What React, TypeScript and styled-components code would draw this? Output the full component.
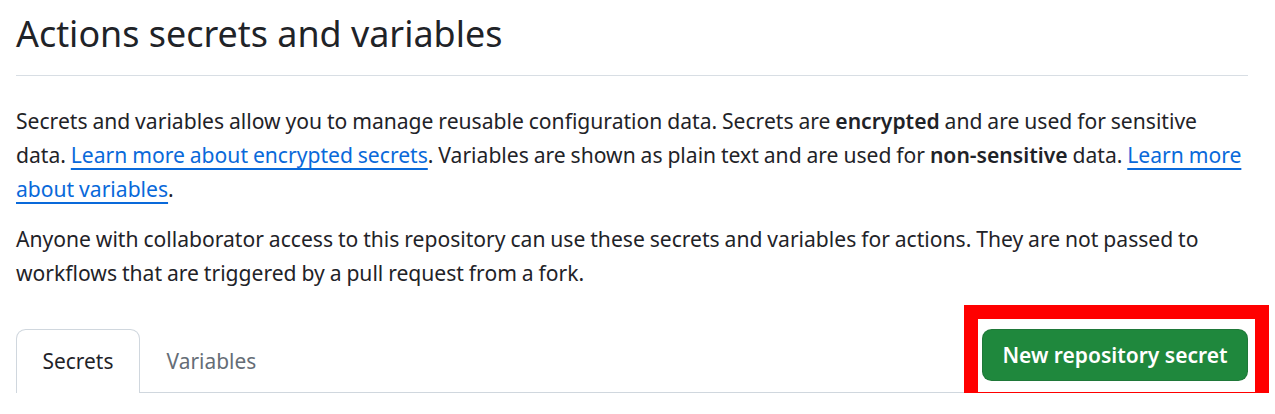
import React from 'react'
import styled, { createGlobalStyle } from 'styled-components'

const FONT = `"Segoe UI", "Noto Sans", Roboto, "Liberation Sans", sans-serif`

const GlobalStyle = createGlobalStyle`
  html, body {
    margin: 0;
    padding: 0;
    background: #ffffff;
  }
  body {
    font-family: ${FONT};
    color: #1f2328;
    -webkit-font-smoothing: antialiased;
  }
`

const Page = styled.div`
  width: 1232px;
  padding: 5px 0 0 16px;
`

const Subhead = styled.div`
  padding-bottom: 12.8px;
  margin-bottom: 28px;
  border-bottom: 1.6px solid #d8dee4;
`

const Heading = styled.h2`
  margin: 0;
  font-size: 35.9px;
  font-weight: 400;
  line-height: 57.6px;
  color: #1f2328;
`

const Paragraph = styled.p`
  margin: 0 0 17px;
  font-size: 21.1px;
  line-height: 33.6px;
  word-spacing: -0.6px;
`

const Link = styled.a`
  color: #0969da;
  text-decoration: underline;
  text-decoration-thickness: 2px;
  text-underline-offset: 5px;
`

const Strong = styled.strong`
  font-weight: 600;
`

const TabNav = styled.div`
  display: flex;
  align-items: flex-start;
  justify-content: space-between;
  margin-top: 40px;
  border-bottom: 1.6px solid #d0d7de;
`

const Tabs = styled.nav`
  display: flex;
  margin-bottom: -1.6px;
`

const Tab = styled.a<{ $selected?: boolean }>`
  display: block;
  padding: 12.8px 25.6px;
  font-size: 20.9px;
  line-height: 36.8px;
  text-decoration: none;
  color: ${({ $selected }) => ($selected ? '#1f2328' : '#656d76')};
  background: ${({ $selected }) => ($selected ? '#ffffff' : 'transparent')};
  border: 1.6px solid ${({ $selected }) => ($selected ? '#d0d7de' : 'transparent')};
  border-bottom-color: ${({ $selected }) => ($selected ? '#ffffff' : 'transparent')};
  border-radius: 9.6px 9.6px 0 0;
`

const ButtonWrap = styled.div`
  position: relative;
`

const PrimaryButton = styled.button`
  display: flex;
  align-items: center;
  height: 51.2px;
  padding: 0 19.5px;
  font-family: ${FONT};
  font-size: 21px;
  font-weight: 600;
  color: #ffffff;
  background: #1f883d;
  border: 1.6px solid rgba(31, 35, 40, 0.15);
  border-radius: 9.6px;
  cursor: pointer;
`

// red annotation frame drawn over the screenshot
const Highlight = styled.span`
  position: absolute;
  top: -24px;
  left: -18px;
  right: -21px;
  bottom: -25px;
  border: 14px solid #ff0000;
  pointer-events: none;
`

export default function App() {
  return (
    <>
      <GlobalStyle />
      <Page>
        <Subhead>
          <Heading>Actions secrets and variables</Heading>
        </Subhead>
        <Paragraph>
          Secrets and variables allow you to manage reusable configuration data. Secrets are{' '}
          <Strong>encrypted</Strong> and are used for sensitive data.{' '}
          <Link href="#">Learn more about encrypted secrets</Link>. Variables are shown as plain text and
          are used for <Strong>non-sensitive</Strong> data. <Link href="#">Learn more about variables</Link>.
        </Paragraph>
        <Paragraph>
          Anyone with collaborator access to this repository can use these secrets and variables for
          actions. They are not passed to workflows that are triggered by a pull request from a fork.
        </Paragraph>
        <TabNav>
          <Tabs>
            <Tab href="#" $selected>
              Secrets
            </Tab>
            <Tab href="#">Variables</Tab>
          </Tabs>
          <ButtonWrap>
            <PrimaryButton>New repository secret</PrimaryButton>
            <Highlight />
          </ButtonWrap>
        </TabNav>
      </Page>
    </>
  )
}
